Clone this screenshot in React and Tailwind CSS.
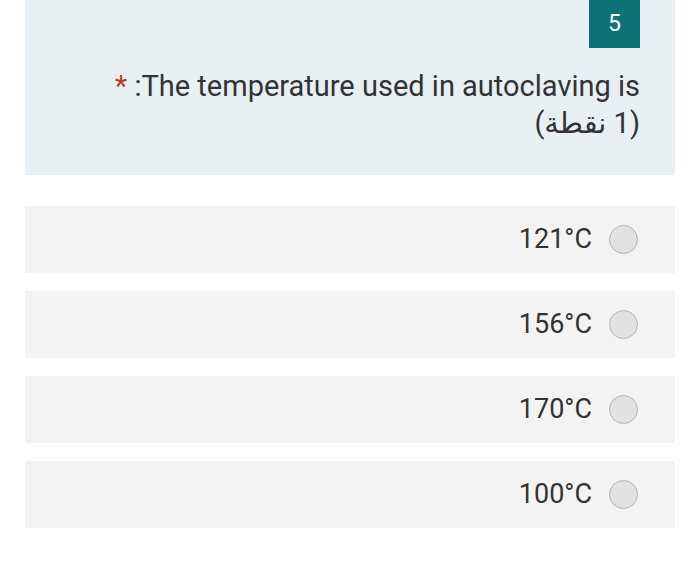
const options = ["121°C", "156°C", "170°C", "100°C"];

export default function App() {
  return (
    <div className="min-h-[564px] w-[700px] bg-white px-[25px] font-['Roboto','Noto_Sans','DejaVu_Sans',sans-serif] text-[#333]">
      <div className="h-[175px] bg-[#e8f0f4] pr-[35px]">
        <div className="flex justify-end">
          <div className="flex h-[48px] w-[51px] items-center justify-center bg-[#0d7377] text-[23px] text-white">
            5
          </div>
        </div>
        <div className="mt-[20px] text-right text-[29px] leading-[37px]">
          <p dir="ltr">
            <span className="text-[#c0392b]">*</span> :The temperature used in autoclaving is
          </p>
          <p className="text-right">
            <span dir="rtl">(1 نقطة)</span>
          </p>
        </div>
      </div>

      <div className="mt-[31px] flex flex-col gap-[18px]">
        {options.map((opt) => (
          <label
            key={opt}
            className="flex h-[67px] items-center justify-end gap-[17px] bg-[#f3f3f3] pr-[37px]"
          >
            <span className="text-[27px]">{opt}</span>
            <span className="h-[29px] w-[29px] rounded-full border border-[#b5b5b5] bg-[#e2e2e2]" />
          </label>
        ))}
      </div>
    </div>
  );
}
